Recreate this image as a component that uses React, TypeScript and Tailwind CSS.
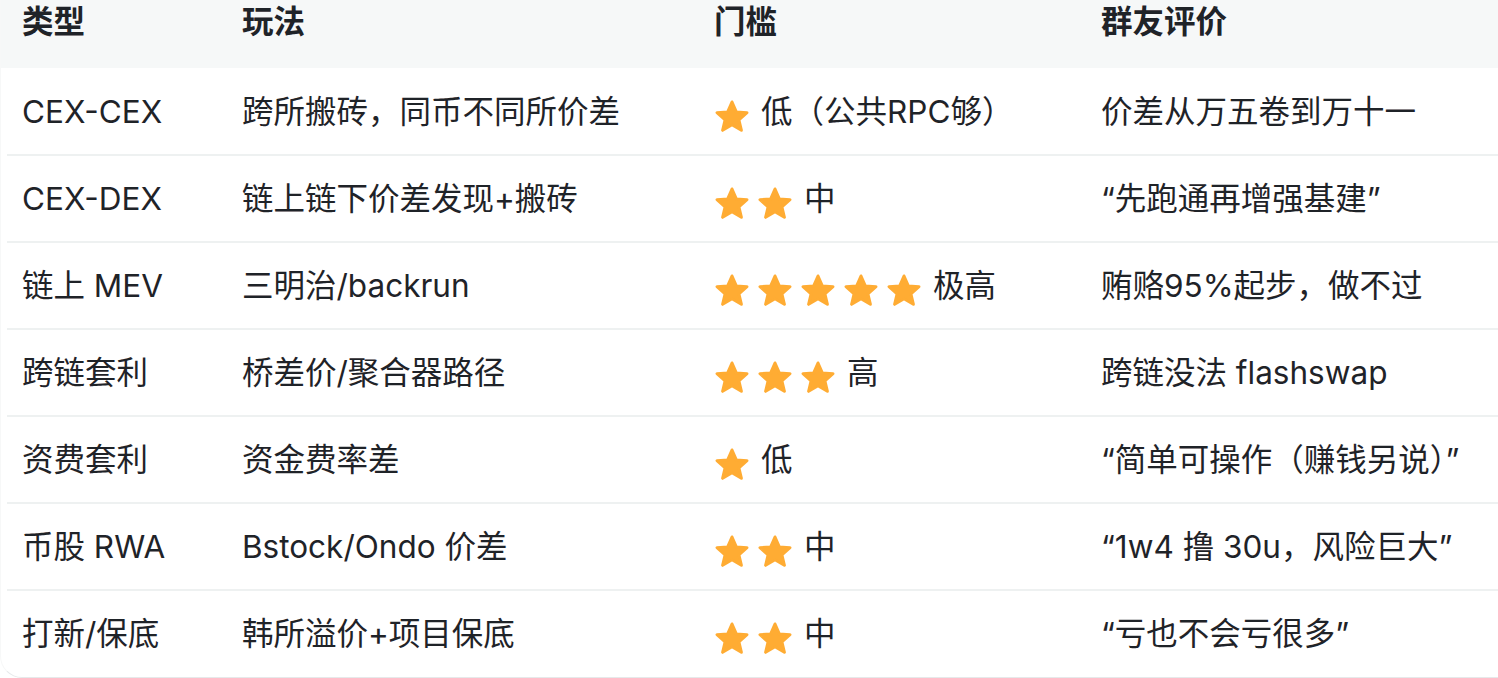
import type { ReactNode } from 'react'

type Row = {
  type: string
  play: string
  stars: number
  level: string
  review: string
}

const rows: Row[] = [
  { type: 'CEX-CEX', play: '跨所搬砖，同币不同所价差', stars: 1, level: '低（公共RPC够）', review: '价差从万五卷到万十一' },
  { type: 'CEX-DEX', play: '链上链下价差发现+搬砖', stars: 2, level: '中', review: '“先跑通再增强基建”' },
  { type: '链上 MEV', play: '三明治/backrun', stars: 5, level: '极高', review: '贿赂95%起步，做不过' },
  { type: '跨链套利', play: '桥差价/聚合器路径', stars: 3, level: '高', review: '跨链没法 flashswap' },
  { type: '资费套利', play: '资金费率差', stars: 1, level: '低', review: '“简单可操作（赚钱另说）”' },
  { type: '币股 RWA', play: 'Bstock/Ondo 价差', stars: 2, level: '中', review: '“1w4 撸 30u，风险巨大”' },
  { type: '打新/保底', play: '韩所溢价+项目保底', stars: 2, level: '中', review: '“亏也不会亏很多”' },
]

function Star() {
  return (
    <svg width="36" height="35" viewBox="0 0 36 35" className="shrink-0">
      <path
        d="M18 3 L22.3 12.9 L33 13.7 L24.9 20.8 L27.4 31.3 L18 25.7 L8.6 31.3 L11.1 20.8 L3 13.7 L13.7 12.9 Z"
        fill="#FFAC33"
        stroke="#FFAC33"
        strokeWidth="3"
        strokeLinejoin="round"
      />
    </svg>
  )
}

function Cell({ children, bold }: { children: ReactNode; bold?: boolean }) {
  return (
    <div className={`flex items-center pl-[21px] whitespace-nowrap ${bold ? 'font-bold' : ''}`}>
      {children}
    </div>
  )
}

export default function App() {
  return (
    <div
      className="w-[1498px] h-[678px] overflow-hidden bg-white text-[31.5px] leading-none text-[#1f2328]"
      style={{ fontFamily: 'Inter, "Noto Sans CJK SC", sans-serif' }}
    >
      <div className="rounded-bl-[22px] border-b border-l border-b-[#e6e9ea] border-l-[#f7f8f8] h-[678px] overflow-hidden">
        {/* header */}
        <div className="grid grid-cols-[220px_472px_387px_1fr] h-[68px] bg-[#f6f8f8] pb-[24px]">
          <Cell bold>类型</Cell>
          <Cell bold>玩法</Cell>
          <Cell bold>门槛</Cell>
          <Cell bold>群友评价</Cell>
        </div>

        {rows.map((r, i) => (
          <div key={r.type} className={i === 0 ? '' : 'ml-[6px] border-t-2 border-[#eef1f1]'}>
            <div className={`grid grid-cols-[220px_472px_387px_1fr] h-[85px] ${i === 0 ? 'mt-[1px]' : '-ml-[6px]'}`}>
              <Cell>{r.type}</Cell>
              <Cell>{r.play}</Cell>
              <Cell>
                <div className="flex items-center gap-[7px] pt-[9px]">
                  {Array.from({ length: r.stars }).map((_, k) => (
                    <Star key={k} />
                  ))}
                </div>
                <span className="ml-[11px]">{r.level}</span>
              </Cell>
              <Cell>{r.review}</Cell>
            </div>
          </div>
        ))}
      </div>
    </div>
  )
}
